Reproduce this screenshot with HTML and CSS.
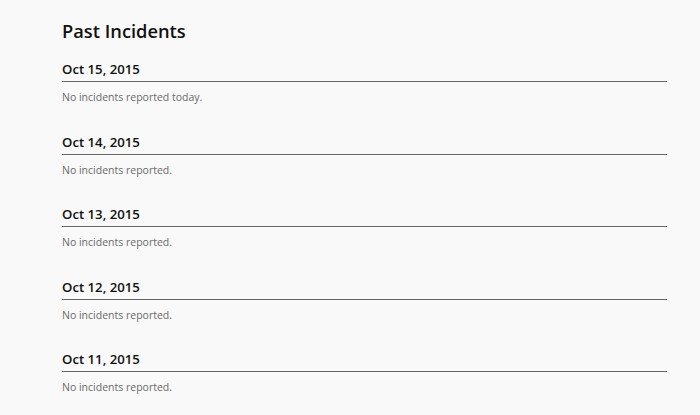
FILE: index.html
```html
<!DOCTYPE html>
<html>
<head>
<meta charset="utf-8">
<link rel="stylesheet" href="styles.css">
</head>
<body>
<div class="page">
  <h1 class="title">Past Incidents</h1>
  <div class="day">
    <div class="date">Oct 15, 2015</div>
    <p class="note">No incidents reported today.</p>
  </div>
  <div class="day">
    <div class="date">Oct 14, 2015</div>
    <p class="note">No incidents reported.</p>
  </div>
  <div class="day">
    <div class="date">Oct 13, 2015</div>
    <p class="note">No incidents reported.</p>
  </div>
  <div class="day">
    <div class="date">Oct 12, 2015</div>
    <p class="note">No incidents reported.</p>
  </div>
  <div class="day">
    <div class="date">Oct 11, 2015</div>
    <p class="note">No incidents reported.</p>
  </div>
</div>
</body>
</html>
```
FILE: styles.css
```css
html, body {
  margin: 0;
  padding: 0;
  background: #f9f9f9;
}
body {
  font-family: "Open Sans", Lato, sans-serif;
  color: #111;
}
.page {
  width: 605px;
  padding: 19px 0 0 62px;
}
.title {
  margin: 0 0 16px;
  font-size: 18.3px;
  line-height: 24px;
  font-weight: 600;
}
.day {
  margin-bottom: 24.6px;
}
.date {
  font-size: 13.2px;
  line-height: 20px;
  font-weight: 600;
  padding-bottom: 2px;
  border-bottom: 1px solid #666;
}
.note {
  margin: 5px 0 0;
  font-size: 10.5px;
  line-height: 20px;
  color: #6a6a6a;
}
```
